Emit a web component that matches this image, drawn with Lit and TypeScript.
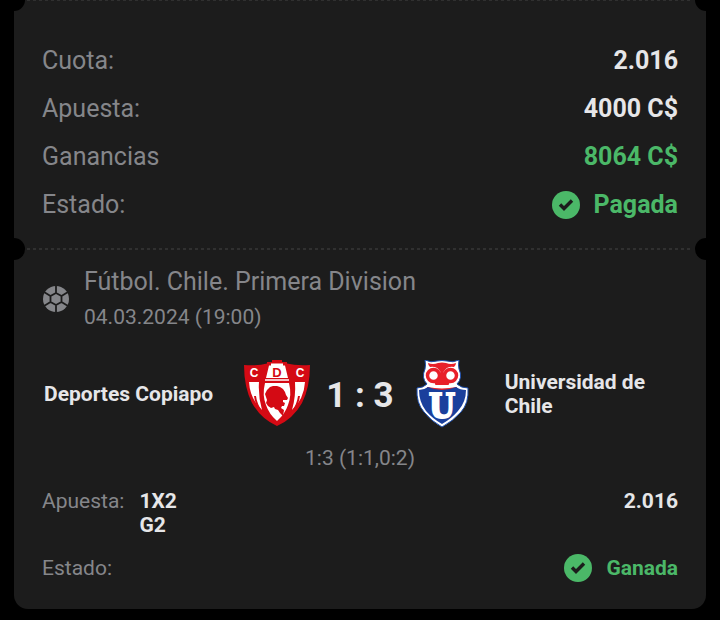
import { LitElement, html, css } from 'lit';
import { customElement, property } from 'lit/decorators.js';

@customElement('status-badge')
export class StatusBadge extends LitElement {
  static styles = css`
    :host {
      display: flex;
      align-items: center;
      gap: 14px;
      color: #4bb868;
      font-weight: 700;
    }

    svg {
      display: block;
      width: 28px;
      height: 28px;
    }
  `;

  render() {
    return html`
      <svg viewBox="0 0 28 28" aria-hidden="true">
        <circle cx="14" cy="14" r="14" fill="#4bb868" />
        <path d="M8 13.500l4 4 8-8" fill="none" stroke="#1c1c1c" stroke-width="3.400" />
      </svg>
      <span><slot></slot></span>
    `;
  }
}

@customElement('ticket-divider')
export class TicketDivider extends LitElement {
  static styles = css`
    :host {
      display: flex;
      align-items: center;
      justify-content: space-between;
      height: 22px;
      margin: 0 -11px;
    }

    .notch {
      width: 22px;
      height: 22px;
      border-radius: 50%;
      background: #000;
    }

    .dots {
      flex: 1;
      height: 2px;
      margin: 0 2px;
      background: repeating-linear-gradient(90deg, #303030 0 3px, transparent 3px 6px);
    }
  `;

  render() {
    return html`
      <span class="notch"></span>
      <span class="dots"></span>
      <span class="notch"></span>
    `;
  }
}

@customElement('team-crest')
export class TeamCrest extends LitElement {
  @property({ type: String })
  team: 'copiapo' | 'uchile' = 'copiapo';

  static styles = css`
    :host {
      display: block;
    }

    svg {
      display: block;
      width: 68px;
      height: 68px;
    }

    .letter {
      font-family: 'Liberation Sans', Arial, sans-serif;
      font-weight: 700;
      text-anchor: middle;
    }

    .slab {
      font-family: 'DejaVu Serif Condensed', 'DejaVu Serif', serif;
      font-weight: 700;
      text-anchor: middle;
    }
  `;

  private _copiapo() {
    return html`
      <svg viewBox="0 0 68 68" role="img" aria-label="Deportes Copiapo">
        <path
          d="M1 5Q15 6 24 3.500V2h5V0h10v2h5v1.500Q53 6 67 5Q67 27 59 43Q50 59 34 66Q18 59 9 43Q1 27 1 5Z"
          fill="#d40a14"
        />
        <path d="M28 3.500h12v2h2L45 18H23L26 5.500h2z" fill="#fff" />
        <path d="M22 20h24" stroke="#fff" stroke-width="1.500" />
        <path d="M6 22h10Q15 36 19 50Q7 39 6 22Z" fill="#fff" />
        <path d="M62 22H52Q53 36 49 50Q61 39 62 22Z" fill="#fff" />
        <path d="M12 36q1 8 6 15M56 36q-1 8-6 15" stroke="#d40a14" stroke-width="2" fill="none" />
        <path d="M22 23h24q3 12-1 22-3 9-11 16-8-7-11-16-4-10-1-22Z" fill="#fff" />
        <path
          d="M22 34l2-4 3-3 3-1 4 0 3 1 3 2 2 3 1 3 2 3-1 2-4 0 0 2 2 1-1 3-2 0-1 2 3 2-1 6-3-3-2-3-3-1-1-2-3 1-3-2-2-3 1-3-1-3Z"
          fill="#d40a14"
        />
        <text class="letter" x="11" y="17" font-size="12" fill="#fff">C</text>
        <text class="letter" x="34" y="17" font-size="13" fill="#d40a14">D</text>
        <text class="letter" x="57" y="17" font-size="12" fill="#fff">C</text>
      </svg>
    `;
  }

  private _uchile() {
    return html`
      <svg viewBox="0 0 68 68" role="img" aria-label="Universidad de Chile">
        <path
          d="M16 0Q22 3 28 1Q33 0 38 1Q44 3 50 0Q49 5 50 9Q54 18 48 24Q52 28 59 28Q60 43 52 52Q44 61 33 67Q22 61 15 52Q7 43 8 28Q14 28 18 24Q12 18 16 9Q17 5 16 0Z"
          fill="#fff"
          stroke="#1d4fae"
        />
        <path d="M19 3q5 2 10 0 4-1 8 0 5 2 10 0 0 2-2 4-6-1-9 3-2 2-3 5-1-3-3-5-3-4-9-3-2-2-2-4Z" fill="#e8202a" />
        <circle cx="24.500" cy="15.500" r="6" fill="#fff" stroke="#e8202a" stroke-width="3.500" />
        <circle cx="41.500" cy="15.500" r="6" fill="#fff" stroke="#e8202a" stroke-width="3.500" />
        <path d="M31.500 12h3l1 6 5 5-1 2H26.500l-1-2 5-5z" fill="#e8202a" />
        <path d="M18 28q15 3 30 0" fill="none" stroke="#e8202a" stroke-width="2" />
        <path
          d="M10 30Q15 30 19 27Q33 33 47 27Q51 30 57 30Q57 42 49 51Q42 59 33 64Q24 59 17 51Q10 42 10 30Z"
          fill="#1a3f9c"
        />
        <text class="slab" x="33" y="58" font-size="33" fill="#fff" stroke="#fff" stroke-width="2">U</text>
      </svg>
    `;
  }

  render() {
    return this.team === 'copiapo' ? this._copiapo() : this._uchile();
  }
}

@customElement('app-root')
export class AppRoot extends LitElement {
  static styles = css`
    :host {
      display: block;
      min-height: 100vh;
      overflow: hidden;
      background: #000;
      color: #e6e6e8;
      font-family: Roboto, sans-serif;
      font-size: 21px;
      line-height: 24px;
    }

    .ticket {
      margin: 0 14px;
      background: #1c1c1c;
      border-radius: 0 0 14px 14px;
    }

    .edge {
      margin-top: -11px;
    }

    dl,
    dd,
    h2,
    p {
      margin: 0;
      font-weight: inherit;
      font-size: inherit;
    }

    .summary {
      padding: 26px 28px 9px;
      font-size: 25px;
    }

    .row {
      display: flex;
      justify-content: space-between;
      align-items: center;
      min-height: 48px;
    }

    dt,
    .muted {
      color: #85868a;
    }

    dd {
      font-weight: 700;
    }

    .win {
      color: #4bb868;
    }

    .league {
      display: flex;
      align-items: center;
      gap: 14px;
      padding: 4px 28px 0;
      color: #85868a;
    }

    .ball {
      width: 28px;
      height: 28px;
    }

    .league h2 {
      font-size: 25px;
      line-height: 36px;
    }

    .league p {
      line-height: 34px;
    }

    .match {
      display: grid;
      grid-template-columns: 1fr auto 1fr;
      align-items: center;
      gap: 28px;
      padding: 26px 30px 0;
      font-weight: 700;
    }

    .score {
      display: flex;
      align-items: center;
      gap: 15px;
    }

    .result {
      padding-top: 4px;
      font-size: 35px;
      line-height: 40px;
      white-space: nowrap;
    }

    .periods {
      padding: 18px 0;
      text-align: center;
    }

    .bet {
      padding: 1px 28px 17px;
    }

    .pick {
      display: flex;
      justify-content: space-between;
    }

    .pick dt {
      margin-right: 15px;
    }

    .pick .odds {
      margin-left: auto;
    }

    .state {
      margin-top: 7px;
    }
  `;

  render() {
    return html`
      <main class="ticket">
        <ticket-divider class="edge"></ticket-divider>

        <dl class="summary">
          <div class="row"><dt>Cuota:</dt><dd>2.016</dd></div>
          <div class="row"><dt>Apuesta:</dt><dd>4000 C$</dd></div>
          <div class="row"><dt>Ganancias</dt><dd class="win">8064 C$</dd></div>
          <div class="row"><dt>Estado:</dt><dd><status-badge>Pagada</status-badge></dd></div>
        </dl>

        <ticket-divider></ticket-divider>

        <header class="league">
          <svg class="ball" viewBox="0 0 28 28" aria-hidden="true">
            <circle cx="14" cy="14" r="13" fill="#85868a" />
            <path
              d="M14 0v8M14 20v8M8.500 11L2 7M19.500 11L26 7M8.500 17L2 21M19.500 17L26 21M14 8l5.500 3v6L14 20l-5.500-3v-6z"
              fill="none"
              stroke="#1c1c1c"
              stroke-width="1.800"
            />
          </svg>
          <div>
            <h2>Fútbol. Chile. Primera Division</h2>
            <p>04.03.2024 (19:00)</p>
          </div>
        </header>

        <section class="match">
          <span>Deportes Copiapo</span>
          <div class="score">
            <team-crest team="copiapo"></team-crest>
            <span class="result">1 : 3</span>
            <team-crest team="uchile"></team-crest>
          </div>
          <span>Universidad de Chile</span>
        </section>
        <p class="periods muted">1:3 (1:1,0:2)</p>

        <dl class="bet">
          <div class="pick">
            <dt>Apuesta:</dt>
            <dd>1X2<br />G2</dd>
            <dd class="odds">2.016</dd>
          </div>
          <div class="row state"><dt>Estado:</dt><dd><status-badge>Ganada</status-badge></dd></div>
        </dl>
      </main>
    `;
  }
}
